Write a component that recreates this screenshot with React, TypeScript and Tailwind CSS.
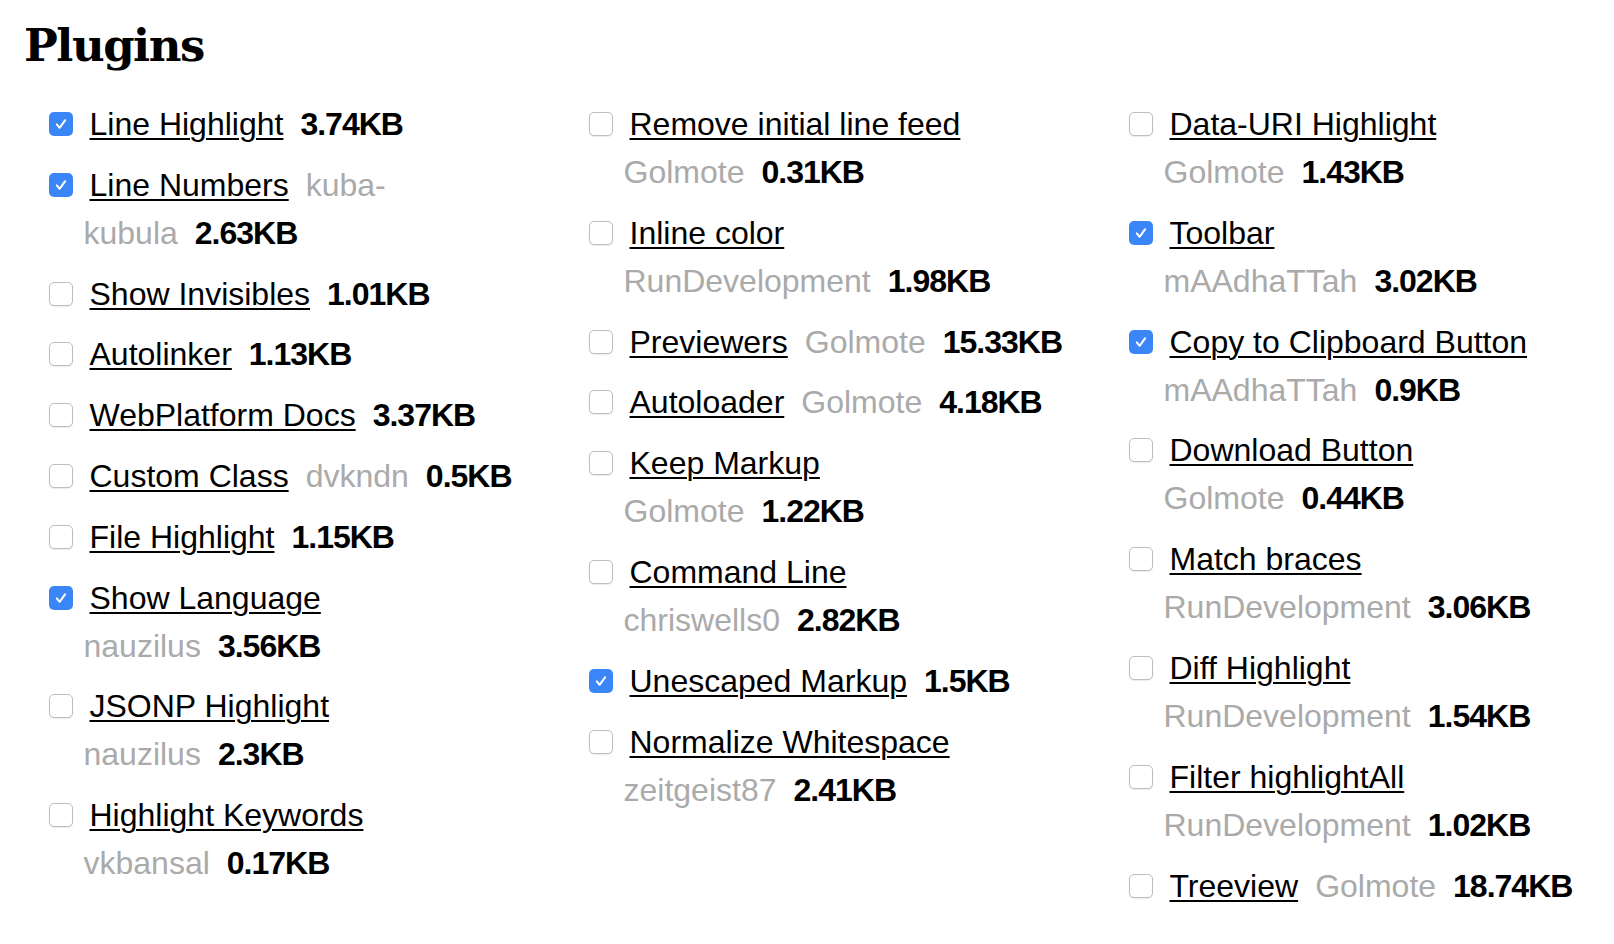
import React from "react";

type Seg = { t: string; k: "a" | "s" };
type Item = { c?: boolean; n: string; l1: Seg[]; l2?: Seg[] };

const a = (t: string): Seg => ({ t, k: "a" });
const s = (t: string): Seg => ({ t, k: "s" });

const col1: Item[] = [
  { c: true, n: "Line Highlight", l1: [s("3.74KB")] },
  { c: true, n: "Line Numbers", l1: [a("kuba-")], l2: [a("kubula"), s("2.63KB")] },
  { n: "Show Invisibles", l1: [s("1.01KB")] },
  { n: "Autolinker", l1: [s("1.13KB")] },
  { n: "WebPlatform Docs", l1: [s("3.37KB")] },
  { n: "Custom Class", l1: [a("dvkndn"), s("0.5KB")] },
  { n: "File Highlight", l1: [s("1.15KB")] },
  { c: true, n: "Show Language", l1: [], l2: [a("nauzilus"), s("3.56KB")] },
  { n: "JSONP Highlight", l1: [], l2: [a("nauzilus"), s("2.3KB")] },
  { n: "Highlight Keywords", l1: [], l2: [a("vkbansal"), s("0.17KB")] },
];

const col2: Item[] = [
  { n: "Remove initial line feed", l1: [], l2: [a("Golmote"), s("0.31KB")] },
  { n: "Inline color", l1: [], l2: [a("RunDevelopment"), s("1.98KB")] },
  { n: "Previewers", l1: [a("Golmote"), s("15.33KB")] },
  { n: "Autoloader", l1: [a("Golmote"), s("4.18KB")] },
  { n: "Keep Markup", l1: [], l2: [a("Golmote"), s("1.22KB")] },
  { n: "Command Line", l1: [], l2: [a("chriswells0"), s("2.82KB")] },
  { c: true, n: "Unescaped Markup", l1: [s("1.5KB")] },
  { n: "Normalize Whitespace", l1: [], l2: [a("zeitgeist87"), s("2.41KB")] },
];

const col3: Item[] = [
  { n: "Data-URI Highlight", l1: [], l2: [a("Golmote"), s("1.43KB")] },
  { c: true, n: "Toolbar", l1: [], l2: [a("mAAdhaTTah"), s("3.02KB")] },
  { c: true, n: "Copy to Clipboard Button", l1: [], l2: [a("mAAdhaTTah"), s("0.9KB")] },
  { n: "Download Button", l1: [], l2: [a("Golmote"), s("0.44KB")] },
  { n: "Match braces", l1: [], l2: [a("RunDevelopment"), s("3.06KB")] },
  { n: "Diff Highlight", l1: [], l2: [a("RunDevelopment"), s("1.54KB")] },
  { n: "Filter highlightAll", l1: [], l2: [a("RunDevelopment"), s("1.02KB")] },
  { n: "Treeview", l1: [a("Golmote"), s("18.74KB")] },
];

function Checkbox({ checked }: { checked?: boolean }) {
  if (checked) {
    return (
      <span className="flex h-[24px] w-[24px] shrink-0 items-center justify-center rounded-[5px] bg-[#3b86f6]">
        <svg width="16" height="16" viewBox="0 0 16 16" fill="none">
          <path
            d="M3.8 8.4 L6.6 11.8 L12.2 4.2"
            stroke="white"
            strokeWidth="2"
            strokeLinecap="round"
            strokeLinejoin="round"
          />
        </svg>
      </span>
    );
  }
  return (
    <span className="block h-[24px] w-[24px] shrink-0 rounded-[5px] border-[1.5px] border-[#bdbdbd] bg-white shadow-[0_1px_1px_rgba(0,0,0,0.08)]" />
  );
}

function SegView({ seg }: { seg: Seg }) {
  if (seg.k === "a") return <span className="text-[#aaaaaa]">{seg.t}</span>;
  return <strong className="font-bold tracking-[-1px] text-black">{seg.t}</strong>;
}

function PluginItem({ item }: { item: Item }) {
  return (
    <div className="mb-[12.8px]">
      <div className="flex h-[48px] items-center gap-[17px] whitespace-nowrap">
        <Checkbox checked={item.c} />
        <a className="text-black underline decoration-[2px] underline-offset-[3px]">{item.n}</a>
        {item.l1.map((sg, i) => (
          <SegView key={i} seg={sg} />
        ))}
      </div>
      {item.l2 && (
        <div className="flex h-[48px] items-center gap-[17px] whitespace-nowrap pl-[35px]">
          {item.l2.map((sg, i) => (
            <SegView key={i} seg={sg} />
          ))}
        </div>
      )}
    </div>
  );
}

function Column({ items }: { items: Item[] }) {
  return (
    <div className="flex flex-col">
      {items.map((it) => (
        <PluginItem key={it.n} item={it} />
      ))}
    </div>
  );
}

export default function App() {
  return (
    <div className="h-[944px] w-[1614px] overflow-hidden bg-white pl-[24px] pt-[23px] text-black">
      <h2
        className="text-[45px] font-bold leading-[45px] tracking-[-1.5px]"
        style={{ fontFamily: '"DejaVu Serif", "Liberation Serif", serif' }}
      >
        Plugins
      </h2>
      <div
        className="mt-[32px] grid grid-cols-[540px_540px_1fr] pl-[24.5px] text-[32px] leading-[48px]"
        style={{ fontFamily: '"Liberation Sans", Arial, sans-serif' }}
      >
        <Column items={col1} />
        <Column items={col2} />
        <Column items={col3} />
      </div>
    </div>
  );
}
